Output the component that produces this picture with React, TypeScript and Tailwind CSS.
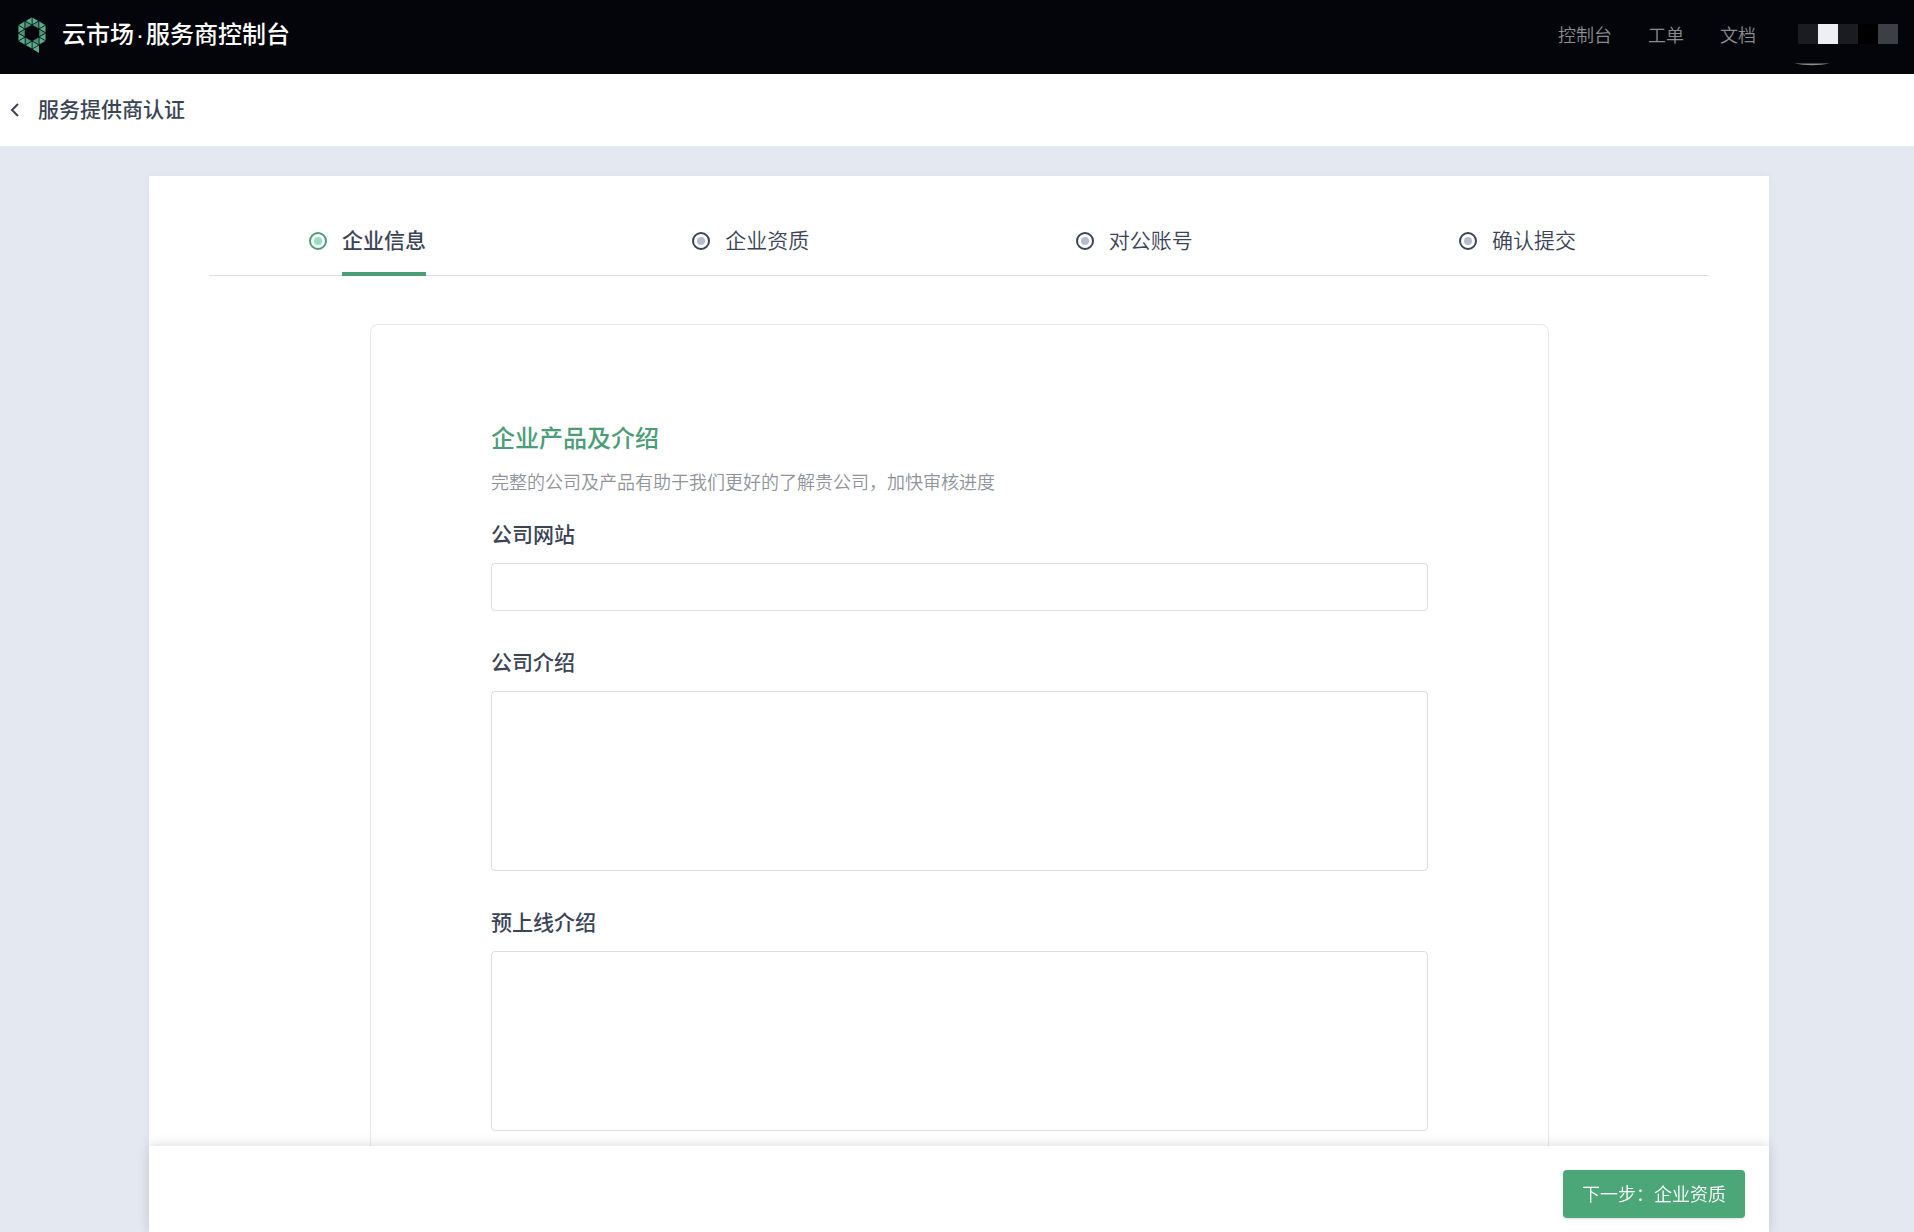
const corner = (radius: number, index: number): [number, number] => {
  const angle = (Math.PI / 3) * index - Math.PI / 2
  return [16 + radius * Math.cos(angle), 17 + radius * Math.sin(angle)]
}

const middle = (a: [number, number], b: [number, number]): [number, number] => [
  (a[0] + b[0]) / 2,
  (a[1] + b[1]) / 2,
]

const triangles = Array.from({ length: 6 }, (_, i) => {
  const a = corner(16, i)
  const b = corner(16, i + 1)
  const innerA = corner(8, i)
  const innerB = corner(8, i + 1)
  const m = middle(a, b)
  return [
    { points: [a, m, innerA], fill: '#5cab8b' },
    { points: [innerA, m, innerB], fill: '#4a957a' },
    { points: [m, b, innerB], fill: '#5cab8b' },
  ]
}).flat()

function Logo() {
  return (
    <svg viewBox="0 0 32 38" className="h-[38px] w-8" aria-hidden="true">
      {triangles.map((t, i) => (
        <polygon
          key={i}
          points={t.points.map((p) => p.join(',')).join(' ')}
          fill={t.fill}
          stroke="#04050a"
          strokeWidth="0.6"
        />
      ))}
      <polygon points="16.6,33 23,29.6 23,37" fill="#5cab8b" />
    </svg>
  )
}

const steps = ['企业信息', '企业资质', '对公账号', '确认提交']
const mosaic = ['bg-[#1b1c20]', 'bg-[#eeeff5]', 'bg-[#1b1c20]', 'bg-black', 'bg-[#3d3f47]']

function Step({ label, active }: { label: string; active: boolean }) {
  return (
    <li>
      <button type="button" className="flex h-[52px] cursor-pointer items-start gap-[15px]" aria-current={active ? 'step' : undefined}>
        <span
          className={
            active
              ? 'mt-2 flex size-[18px] items-center justify-center rounded-full border-2 border-[#4c9d77]'
              : 'mt-2 flex size-[18px] items-center justify-center rounded-full border-2 border-[#3b4457]'
          }
        >
          <span className={active ? 'size-2 rounded-full bg-[#9bdcc0]' : 'size-2 rounded-full bg-[#b5bdca]'} />
        </span>
        <span
          className={
            active
              ? 'h-full border-b-4 border-[#4c9d77] text-[21px] leading-[30px] font-medium'
              : 'h-full text-[21px] leading-[30px] font-[350]'
          }
        >
          {label}
        </span>
      </button>
    </li>
  )
}

function Field({ id, label, multiline }: { id: string; label: string; multiline?: boolean }) {
  const box = 'block w-full rounded border border-[#d8dee1] bg-white px-3 outline-none focus:border-[#4ba778]'
  return (
    <div>
      <label htmlFor={id} className="mb-4 block text-[21px] leading-7 font-medium">
        {label}
      </label>
      {multiline ? (
        <textarea id={id} className={`${box} h-[180px] resize-none py-3`} />
      ) : (
        <input id={id} type="text" className={`${box} h-12`} />
      )}
    </div>
  )
}

export default function App() {
  return (
    <div className="flex h-screen flex-col bg-[#e4e9f1] font-['Noto_Sans_CJK_SC',sans-serif] text-[#3b4457]">
      <header className="flex h-[74px] shrink-0 items-center justify-between bg-[#04050a] px-4 pb-1">
        <div className="flex items-center gap-[14px]">
          <Logo />
          <h1 className="font-['Liberation_Sans','Noto_Sans_CJK_SC',sans-serif] text-2xl font-medium text-white">
            云市场<span className="mx-0.5">·</span>服务商控制台
          </h1>
        </div>
        <nav className="flex items-center gap-9 text-lg font-[350] text-[#8b8c90]">
          <a href="#console" className="pb-0.5">控制台</a>
          <a href="#tickets" className="pb-0.5">工单</a>
          <a href="#docs" className="pb-0.5">文档</a>
          <button type="button" aria-label="账户" className="relative mb-0.5 ml-[6px] flex cursor-pointer">
            {mosaic.map((tone, i) => (
              <span key={i} className={`size-5 ${tone}`} />
            ))}
            <svg viewBox="0 0 36 4" className="absolute top-[39px] -left-1 h-1 w-9" aria-hidden="true">
              <path d="M0 0.5H36Q18 4 0 0.5Z" fill="#8d8d8c" />
            </svg>
          </button>
        </nav>
      </header>

      <div className="flex h-[72px] shrink-0 items-center bg-white pl-[10px]">
        <button type="button" aria-label="返回" className="cursor-pointer">
          <svg viewBox="0 0 10 14" className="h-[14px] w-[10px]" fill="none" stroke="currentColor" strokeWidth="2">
            <path d="M8 1L2 7L8 13" />
          </svg>
        </button>
        <h2 className="ml-[18px] pb-1 text-[21px] leading-7 font-medium">服务提供商认证</h2>
      </div>

      <main className="mr-[145px] ml-[149px] flex min-h-0 flex-1 flex-col pt-[30px]">
        <div className="min-h-0 flex-1 overflow-y-auto bg-white px-[60px] pt-12 shadow-[0_0_8px_rgba(60,90,70,0.06)] [scrollbar-width:none]">
          <ol className="flex justify-between bg-[linear-gradient(#dadfe3,#dadfe3)] bg-[length:100%_1px] bg-bottom bg-no-repeat pr-[133px] pl-[100px]">
            {steps.map((label, i) => (
              <Step key={label} label={label} active={i === 0} />
            ))}
          </ol>
          <form
            id="company"
            className="mt-12 mr-[160px] mb-12 ml-[161px] rounded-lg border border-[#e6e8eb] px-[120px] pt-[94px] pb-24"
            onSubmit={(e) => e.preventDefault()}
          >
            <h3 className="text-2xl leading-9 font-medium text-[#4c9d77]">企业产品及介绍</h3>
            <p className="mt-3 mb-6 text-lg leading-7 font-[350] text-[#8f939b]">
              完整的公司及产品有助于我们更好的了解贵公司，加快审核进度
            </p>
            <div className="flex flex-col gap-9">
              <Field id="website" label="公司网站" />
              <Field id="intro" label="公司介绍" multiline />
              <Field id="prelaunch" label="预上线介绍" multiline />
            </div>
          </form>
        </div>
        <footer className="relative z-10 flex shrink-0 justify-end bg-white px-6 pt-6 pb-[14px] shadow-[0_0_12px_rgba(0,0,0,0.16)]">
          <button
            type="submit"
            form="company"
            className="h-12 cursor-pointer rounded bg-[#4ba778] px-[19px] pb-0.5 text-lg font-[350] text-white shadow-sm"
          >
            下一步：企业资质
          </button>
        </footer>
      </main>
    </div>
  )
}
